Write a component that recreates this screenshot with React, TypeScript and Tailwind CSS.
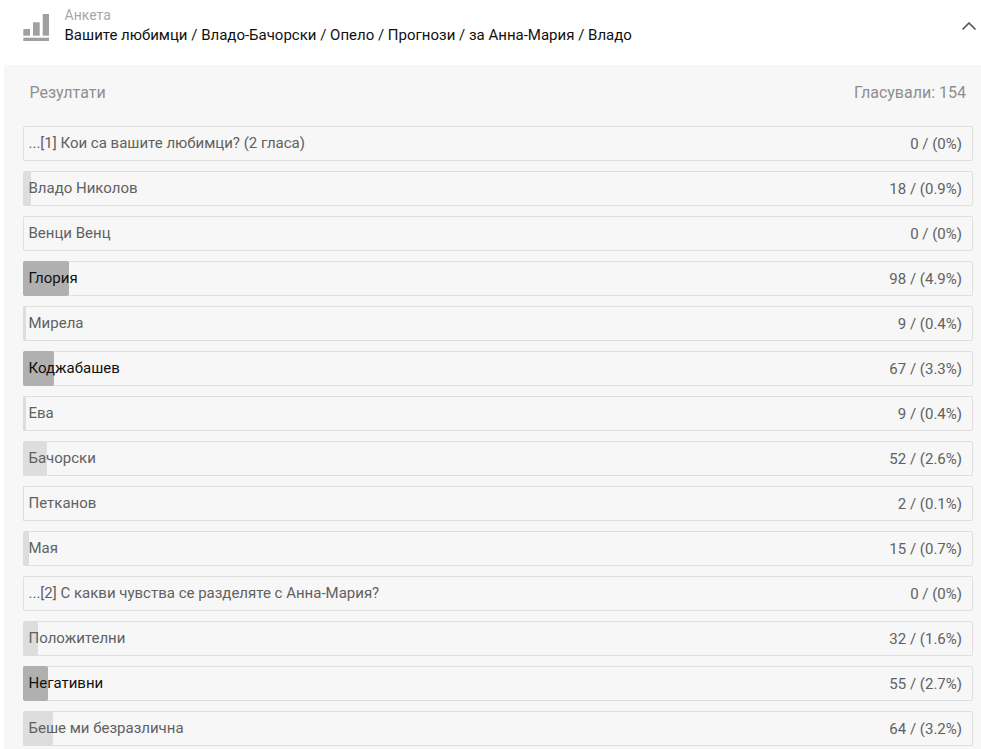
import { ChevronUp } from 'lucide-react';

interface PollRow {
  label: string;
  votes: number;
  percent: number;
  highlight?: boolean;
}

const rows: PollRow[] = [
  { label: '...[1] Кои са вашите любимци? (2 гласа)', votes: 0, percent: 0 },
  { label: 'Владо Николов', votes: 18, percent: 0.9 },
  { label: 'Венци Венц', votes: 0, percent: 0 },
  { label: 'Глория', votes: 98, percent: 4.9, highlight: true },
  { label: 'Мирела', votes: 9, percent: 0.4 },
  { label: 'Коджабашев', votes: 67, percent: 3.3, highlight: true },
  { label: 'Ева', votes: 9, percent: 0.4 },
  { label: 'Бачорски', votes: 52, percent: 2.6 },
  { label: 'Петканов', votes: 2, percent: 0.1 },
  { label: 'Мая', votes: 15, percent: 0.7 },
  { label: '...[2] С какви чувства се разделяте с Анна-Мария?', votes: 0, percent: 0 },
  { label: 'Положителни', votes: 32, percent: 1.6 },
  { label: 'Негативни', votes: 55, percent: 2.7, highlight: true },
  { label: 'Беше ми безразлична', votes: 64, percent: 3.2 },
];

function PollIcon() {
  return (
    <svg width="26" height="27" viewBox="0 0 26 27" className="mt-[14px] shrink-0 text-[#a0a0a0]" fill="currentColor">
      <rect x="0.3" y="15" width="6.7" height="6.7" />
      <rect x="10" y="8.3" width="6.7" height="13.4" />
      <rect x="19.7" y="0" width="6.3" height="21.7" />
      <rect x="0.3" y="23.7" width="25.7" height="3.3" />
    </svg>
  );
}

function ResultRow({ row }: { row: PollRow }) {
  return (
    <div className="relative flex h-[35px] items-center justify-between rounded-[2px] border border-[#e0e0e0] pl-[4.5px] pr-[4px]">
      {row.percent > 0 && (
        <div
          className={`absolute -inset-y-px -left-px rounded-[2px] ${row.highlight ? 'bg-[#b0b0b0]' : 'bg-[#dddddd]'}`}
          style={{ width: `${Math.max(1, Math.floor(row.percent * 9.48))}px` }}
        />
      )}
      <span className={`relative text-[15px] ${row.highlight ? 'text-[#111111]' : 'text-[#616161]'}`}>{row.label}</span>
      <span className="relative pr-[6px] pt-px text-[15px] text-[#616161]">
        {row.votes} / ({row.percent}%)
      </span>
    </div>
  );
}

export default function App() {
  return (
    <div className="h-[749px] overflow-hidden bg-white font-['Roboto',sans-serif]">
      <header className="flex h-[65px] items-start justify-between pl-[23px]">
        <div className="flex items-start gap-[15.5px]">
          <PollIcon />
          <div className="mt-[6px]">
            <div className="text-[14px] leading-[19px] text-[#a8a8a8]">Анкета</div>
            <div className="text-[15px] leading-[20px] text-[#111111]">
              Вашите любимци / Владо-Бачорски / Опело / Прогнози / за Анна-Мария / Владо
            </div>
          </div>
        </div>
        <ChevronUp size={24} strokeWidth={1.75} className="mt-[14px] text-[#555555]" />
      </header>

      <section className="ml-[4px] bg-[#f7f7f7] pb-[20px]">
        <div className="mb-[6px] flex h-[55px] items-center justify-between pl-[25.5px] pr-[15px] text-[16px] text-[#8f8f8f]">
          <span>Резултати</span>
          <span>Гласували: 154</span>
        </div>
        <div className="flex flex-col gap-[10px] pl-[19px] pr-[8px]">
          {rows.map((row) => (
            <ResultRow key={row.label} row={row} />
          ))}
        </div>
      </section>
    </div>
  );
}
